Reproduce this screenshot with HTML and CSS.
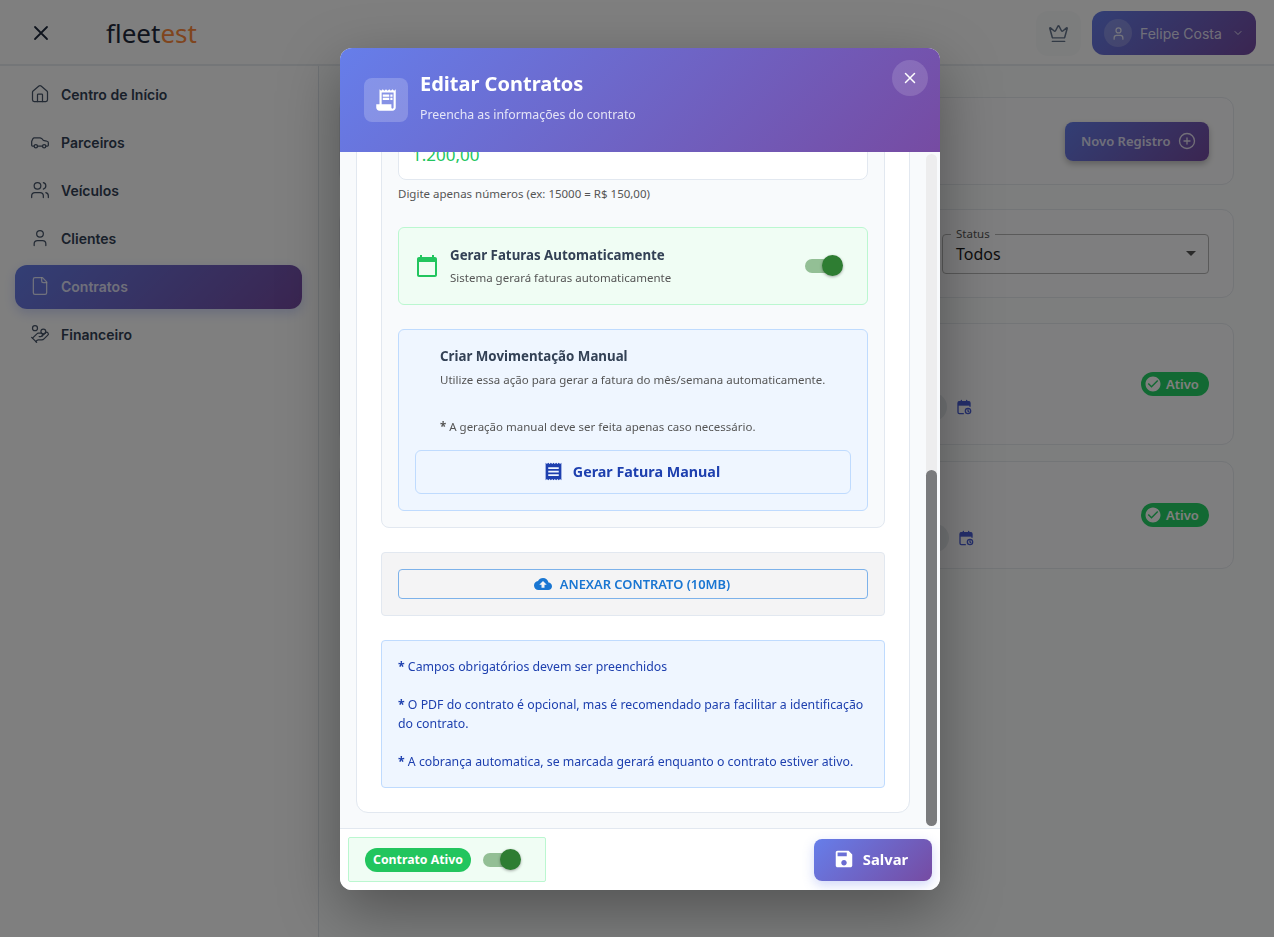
FILE: index.html
```html
<!doctype html>
<html lang="pt-BR">
<head>
<meta charset="utf-8">
<title>Fleetest - Contratos</title>
<link rel="stylesheet" href="styles.css">
</head>

<body>
<header class="topbar">
    <svg class="menu-x" viewBox="0 0 24 24"><path d="M18 6 6 18M6 6l12 12"/></svg>
    <div class="logo">fleet<span>est</span></div>
    <div class="crown-btn">
        <svg viewBox="0 0 24 24"><path d="M11.562 3.266a.5.5 0 0 1 .876 0L15.39 8.87a1 1 0 0 0 1.516.294L21.183 5.5a.5.5 0 0 1 .798.519l-2.834 10.246a1 1 0 0 1-.956.734H5.81a1 1 0 0 1-.957-.734L2.02 6.02a.5.5 0 0 1 .798-.519l4.276 3.664a1 1 0 0 0 1.516-.294z"/><path d="M5 21h14"/></svg>
    </div>
    <div class="user-btn">
        <span class="avatar"><svg viewBox="0 0 24 24"><circle cx="12" cy="7" r="4"/><path d="M19 21v-2a4 4 0 0 0-4-4H9a4 4 0 0 0-4 4v2"/></svg></span>
        <span class="user-name">Felipe Costa</span>
        <svg class="chev" viewBox="0 0 24 24"><path d="m6 9 6 6 6-6"/></svg>
    </div>
</header>

<div class="page">
    <nav class="sidebar">
        <a class="nav-item"><svg viewBox="0 0 24 24"><path d="M15 21v-8a1 1 0 0 0-1-1h-4a1 1 0 0 0-1 1v8"/><path d="M3 10a2 2 0 0 1 .709-1.528l7-5.999a2 2 0 0 1 2.582 0l7 5.999A2 2 0 0 1 21 10v9a2 2 0 0 1-2 2H5a2 2 0 0 1-2-2z"/></svg>Centro de Início</a>
        <a class="nav-item"><svg viewBox="0 0 24 24"><path d="M19 17h2c.6 0 1-.4 1-1v-3c0-.9-.7-1.700-1.500-1.900C18.700 10.600 16 10 16 10s-1.300-1.400-2.200-2.300c-.5-.4-1.100-.7-1.800-.7H5c-.6 0-1.100.4-1.400.9l-1.400 2.900A3.700 3.700 0 0 0 2 12v4c0 .6.4 1 1 1h2"/><circle cx="7" cy="17" r="2"/><path d="M9 17h6"/><circle cx="17" cy="17" r="2"/></svg>Parceiros</a>
        <a class="nav-item"><svg viewBox="0 0 24 24"><path d="M16 21v-2a4 4 0 0 0-4-4H6a4 4 0 0 0-4 4v2"/><circle cx="9" cy="7" r="4"/><path d="M22 21v-2a4 4 0 0 0-3-3.870"/><path d="M16 3.130a4 4 0 0 1 0 7.750"/></svg>Veículos</a>
        <a class="nav-item"><svg viewBox="0 0 24 24"><path d="M19 21v-2a4 4 0 0 0-4-4H9a4 4 0 0 0-4 4v2"/><circle cx="12" cy="7" r="4"/></svg>Clientes</a>
        <a class="nav-item active"><svg viewBox="0 0 24 24"><path d="M15 2H6a2 2 0 0 0-2 2v16a2 2 0 0 0 2 2h12a2 2 0 0 0 2-2V7z"/><path d="M14 2v4a2 2 0 0 0 2 2h4"/></svg>Contratos</a>
        <a class="nav-item"><svg viewBox="0 0 24 24"><path d="M11 15h2a2 2 0 1 0 0-4h-3c-.6 0-1.100.2-1.400.6L3 17"/><path d="m7 21 1.600-1.400c.3-.4.8-.6 1.400-.6h4c1.100 0 2.100-.4 2.800-1.200l4.600-4.400a2 2 0 0 0-2.750-2.910l-4.200 3.900"/><path d="m2 16 6 6"/><circle cx="16" cy="9" r="2.900"/><circle cx="6" cy="5" r="3"/></svg>Financeiro</a>
    </nav>

    <main class="content">
        <section class="card card-head">
            <div class="new-btn">Novo Registro
                <svg viewBox="0 0 24 24"><circle cx="12" cy="12" r="10"/><path d="M8 12h8M12 8v8"/></svg>
            </div>
        </section>
        <section class="card card-filter">
            <div class="select">
                <span class="select-label">Status</span>
                <span>Todos</span>
                <i class="caret"></i>
            </div>
        </section>
        <section class="card card-row">
            <div class="meta">
                <i class="dot"></i>
                <svg class="cal-icon" viewBox="0 0 24 24"><path class="cal-band" d="M3 4h18v6H3z"/><path d="M8 2v4M16 2v4"/><path d="M21 11V6a2 2 0 0 0-2-2H5a2 2 0 0 0-2 2v14a2 2 0 0 0 2 2h6"/><circle cx="18" cy="18" r="4"/><path d="M18 16v2l1 1"/></svg>
            </div>
            <span class="pill"><svg viewBox="0 0 24 24"><path d="M12 2C6.480 2 2 6.480 2 12s4.480 10 10 10 10-4.480 10-10S17.520 2 12 2zm-2 15-5-5 1.410-1.410L10 14.170l7.590-7.590L19 8l-9 9z"/></svg>Ativo</span>
        </section>
        <section class="card card-row card-short">
            <div class="meta">
                <i class="dot"></i>
                <svg class="cal-icon" viewBox="0 0 24 24"><path class="cal-band" d="M3 4h18v6H3z"/><path d="M8 2v4M16 2v4"/><path d="M21 11V6a2 2 0 0 0-2-2H5a2 2 0 0 0-2 2v14a2 2 0 0 0 2 2h6"/><circle cx="18" cy="18" r="4"/><path d="M18 16v2l1 1"/></svg>
            </div>
            <span class="pill"><svg viewBox="0 0 24 24"><path d="M12 2C6.480 2 2 6.480 2 12s4.480 10 10 10 10-4.480 10-10S17.520 2 12 2zm-2 15-5-5 1.410-1.410L10 14.170l7.590-7.590L19 8l-9 9z"/></svg>Ativo</span>
        </section>
    </main>
</div>

<div class="overlay"></div>

<div class="modal">
    <div class="modal-head">
        <div class="head-icon">
            <svg viewBox="0 0 24 24"><path d="M19.500 3.500 18 2l-1.500 1.500L15 2l-1.500 1.500L12 2l-1.500 1.500L9 2 7.500 3.500 6 2v14H3v3c0 1.660 1.340 3 3 3h12c1.660 0 3-1.340 3-3V2l-1.500 1.500zM19 19c0 .550-.450 1-1 1s-1-.450-1-1v-3H8V5h11v14z"/><path d="M9 7h6v2H9zm7 0h2v2h-2zm-7 3h6v2H9zm7 0h2v2h-2z"/></svg>
        </div>
        <div>
            <h2 class="modal-title">Editar Contratos</h2>
            <p class="modal-sub">Preencha as informações do contrato</p>
        </div>
        <div class="modal-close"><svg viewBox="0 0 24 24"><path d="M18 6 6 18M6 6l12 12"/></svg></div>
    </div>

    <div class="modal-body">
        <div class="outer-card">
            <div class="inner-card">
                <div class="money-field">1.200,00</div>
                <p class="helper">Digite apenas números (ex: 15000 = R$ 150,00)</p>

                <div class="auto-box">
                    <svg class="auto-icon" viewBox="0 0 24 24"><path d="M20 3h-1V1h-2v2H7V1H5v2H4c-1.100 0-2 .9-2 2v16c0 1.100.9 2 2 2h16c1.100 0 2-.9 2-2V5c0-1.100-.9-2-2-2zm0 18H4V8h16v13z"/></svg>
                    <div class="auto-text">
                        <div class="box-title">Gerar Faturas Automaticamente</div>
                        <div class="box-desc">Sistema gerará faturas automaticamente</div>
                    </div>
                    <span class="switch"><i></i></span>
                </div>

                <div class="manual-box">
                    <div class="box-title manual-title">Criar Movimentação Manual</div>
                    <div class="box-desc manual-desc">Utilize essa ação para gerar a fatura do mês/semana automaticamente.</div>
                    <div class="box-desc manual-note"><b>*</b> A geração manual deve ser feita apenas caso necessário.</div>
                    <div class="manual-btn">
                        <svg viewBox="0 0 24 24"><path d="M18 17H6v-2h12v2zm0-4H6v-2h12v2zm0-4H6V7h12v2zM3 22l1.500-1.500L6 22l1.500-1.500L9 22l1.500-1.500L12 22l1.500-1.500L15 22l1.500-1.500L18 22l1.500-1.500L21 22V2l-1.500 1.500L18 2l-1.500 1.500L15 2l-1.500 1.500L12 2l-1.500 1.500L9 2 7.500 3.500 6 2 4.500 3.500 3 2v20z"/></svg>
                        Gerar Fatura Manual
                    </div>
                </div>
            </div>

            <div class="attach-box">
                <div class="attach-btn">
                    <svg viewBox="0 0 24 24"><path d="M19.350 10.040C18.670 6.590 15.640 4 12 4 9.110 4 6.600 5.640 5.350 8.040 2.340 8.360 0 10.910 0 14c0 3.310 2.690 6 6 6h13c2.760 0 5-2.240 5-5 0-2.640-2.050-4.780-4.650-4.960zM14 13v4h-4v-4H7l5-5 5 5h-3z"/></svg>
                    ANEXAR CONTRATO (10MB)
                </div>
            </div>

            <div class="info-box">
                <p><b>*</b> Campos obrigatórios devem ser preenchidos</p>
                <p><b>*</b> O PDF do contrato é opcional, mas é recomendado para facilitar a identificação do contrato.</p>
                <p><b>*</b> A cobrança automatica, se marcada gerará enquanto o contrato estiver ativo.</p>
            </div>
        </div>
        <div class="scroll-track"><div class="scroll-thumb"></div></div>
    </div>

    <div class="modal-foot">
        <div class="active-box">
            <span class="active-pill">Contrato Ativo</span>
            <span class="switch"><i></i></span>
        </div>
        <div class="save-btn">
            <svg viewBox="0 0 24 24"><path d="M17 3H5c-1.110 0-2 .9-2 2v14c0 1.100.890 2 2 2h14c1.100 0 2-.9 2-2V7l-4-4zm-5 16c-1.660 0-3-1.340-3-3s1.340-3 3-3 3 1.340 3 3-1.340 3-3 3zm3-10H5V5h10v4z"/></svg>
            Salvar
        </div>
    </div>
</div>
</body>
</html>
```

FILE: styles.css
```css
*{box-sizing:border-box;}
html,body{margin:0;padding:0;height:100%;}
body{background:#fbfcfd;font-family:"Inter","Noto Sans",sans-serif;color:#1e293b;overflow:hidden;}
p,h2{margin:0;}
svg{display:block;fill:none;stroke:currentColor;stroke-width:2;stroke-linecap:round;stroke-linejoin:round;}

/* top bar */
.topbar{display:flex;align-items:center;height:66px;padding:2px 18px 0 29px;background:#fff;border-bottom:2px solid #e8ecf1;}
.menu-x{width:24px;height:24px;stroke-width:1.8;color:#1e293b;}
.logo{margin-left:53px;font:400 26px/1 "Noto Sans",sans-serif;color:#1e293b;}
.logo span{color:#ff8a3c;}
.crown-btn{display:flex;align-items:center;justify-content:center;width:45px;height:45px;margin-left:auto;background:#f9fafb;border-radius:12px;color:#64748b;}
.crown-btn svg{width:21px;height:21px;stroke-width:1.7;}
.user-btn{display:flex;align-items:center;width:164px;height:44px;margin-left:11px;padding:0 12px;border-radius:12px;background:linear-gradient(135deg,#667eea,#764ba2);color:rgba(255,255,255,.8);}
.avatar{display:flex;align-items:center;justify-content:center;width:28px;height:28px;border-radius:50%;background:rgba(255,255,255,.2);}
.avatar svg{width:15px;height:15px;}
.user-name{margin-left:8px;font-size:14px;white-space:nowrap;}
.chev{width:12px;height:12px;margin-left:auto;}

/* page behind the dialog */
.page{display:flex;height:871px;}
.sidebar{flex:none;width:319px;padding:7px 16px 0 15px;background:#fff;border-right:1px solid #dfe4ea;}
.nav-item{display:flex;align-items:center;height:44px;margin-bottom:4px;padding:0 0 2px 15px;border-radius:12px;font-size:14px;font-weight:600;color:#334155;}
.nav-item svg{flex:none;width:20px;height:20px;margin-right:11px;stroke-width:1.5;color:#475569;}
.nav-item.active{background:linear-gradient(135deg,#667eea,#764ba2);color:rgba(255,255,255,.8);box-shadow:0 4px 12px rgba(102,126,234,.3);}
.nav-item.active svg{color:rgba(255,255,255,.8);}
.content{flex:1;padding:31px 40px 0 20px;}
.card{display:flex;align-items:center;justify-content:flex-end;padding:0 24px;background:#fdfdfe;border:1px solid #e6eaef;border-radius:12px;}
.card-head{height:88px;margin-bottom:24px;}
.card-filter{height:89px;margin-bottom:25px;}
.card-row{height:122px;margin-bottom:16px;justify-content:space-between;}
.card-short{height:108px;}
.new-btn{display:flex;align-items:center;gap:8px;width:144px;height:39px;padding-left:16px;border-radius:8px;background:linear-gradient(135deg,#667eea,#764ba2);color:rgba(255,255,255,.8);font:600 13px "Noto Sans",sans-serif;box-shadow:0 3px 6px rgba(0,0,0,.25);white-space:nowrap;}
.new-btn svg{width:18px;height:18px;stroke-width:1.8;}
.select{position:relative;display:flex;align-items:center;justify-content:space-between;width:267px;height:40px;padding:0 13px;border:1px solid #b5b5b5;border-radius:4px;font:16px "Noto Sans",sans-serif;color:#1a1a1a;}
.select-label{position:absolute;left:8px;top:-8px;padding:0 5px;background:#fdfdfe;font-size:11.5px;line-height:14px;color:#555;}
.caret{width:0;height:0;border:5px solid transparent;border-top-color:#555;border-bottom:0;margin-right:-1px;}
.meta{flex:1;display:flex;align-items:center;justify-content:flex-end;gap:9px;margin-top:46px;padding-right:169px;}
.card-short .meta{padding-right:167px;}
.dot{width:28px;height:28px;border-radius:50%;background:#e6eaef;}
.cal-icon{width:16px;height:16px;color:#4a5fd8;}
.cal-band{fill:currentColor;stroke:none;}
.pill{display:flex;align-items:center;gap:4px;width:68px;height:24px;padding-left:3px;border-radius:12px;background:#25d366;color:#fff;font:600 13px "Noto Sans",sans-serif;}
.pill svg{width:18px;height:18px;fill:currentColor;stroke:none;}

.overlay{position:fixed;inset:0;background:rgba(0,0,0,.5);backdrop-filter:blur(.4px);}

/* dialog */
.modal{position:fixed;left:340px;top:48px;display:flex;flex-direction:column;width:600px;height:842px;border-radius:12px;overflow:hidden;background:#fff;font-family:"Noto Sans",sans-serif;box-shadow:0 20px 60px rgba(0,0,0,.35);}
.modal-head{position:relative;z-index:1;flex:none;display:flex;align-items:center;gap:12px;height:104px;padding:0 24px;background:linear-gradient(135deg,#667eea,#764ba2);color:#fff;}
.head-icon{display:flex;align-items:center;justify-content:center;width:44px;height:44px;border-radius:8px;background:rgba(255,255,255,.2);}
.head-icon svg{width:26px;height:26px;fill:#fff;stroke:none;}
.modal-title{font-size:20px;font-weight:700;line-height:28px;margin-top:-7px;}
.modal-sub{margin-top:8px;font-size:12.3px;line-height:18px;color:rgba(255,255,255,.82);}
.modal-close{position:absolute;right:12px;top:12px;display:flex;align-items:center;justify-content:center;width:36px;height:36px;border-radius:50%;background:rgba(255,255,255,.15);}
.modal-close svg{width:18px;height:18px;}

.modal-body{position:relative;flex:1;min-height:0;overflow:hidden;padding:0 30px 0 16px;background:#f8fafc;}
.outer-card{margin-top:-60px;padding:24px;background:#fff;border:1px solid #e2e8f0;border-radius:12px;}
.inner-card{padding:16px;background:#f8fafc;border:1px solid #e2e8f0;border-radius:8px;}
.money-field{height:46px;padding:10px 13px 0;background:#fff;border:1px solid #e2e8f0;border-radius:8px;font-size:17px;line-height:20px;color:#22c55e;}
.helper{margin-top:5px;font-size:11.5px;line-height:18px;color:#555;}

.auto-box{display:flex;align-items:center;height:78px;margin-top:24px;padding:0 26px 0 16px;background:#f0fdf4;border:1px solid #bbf7d0;border-radius:6px;}
.auto-icon{flex:none;width:24px;height:24px;margin-right:11px;fill:#22c55e;stroke:none;}
.auto-text{flex:1;padding-bottom:2px;}
.box-title{font-size:13.3px;font-weight:700;line-height:24px;color:#334155;}
.box-desc{font-size:11.5px;line-height:20px;color:#555;}
.auto-text .box-desc{margin-top:1px;}

.manual-box{margin-top:24px;padding:14px 16px 16px;background:#eff6ff;border:1px solid #bfdbfe;border-radius:6px;}
.manual-title,.manual-desc,.manual-note{padding-left:25px;}
.manual-desc{margin-top:2px;}
.manual-note{margin-top:27px;}
.manual-btn{display:flex;align-items:center;justify-content:center;gap:9px;height:44px;margin-top:13px;padding:0 3px 2px 0;border:1px solid #bfdbfe;border-radius:6px;color:#1e40af;font-size:14.3px;font-weight:700;}
.manual-btn svg{width:21px;height:21px;fill:currentColor;stroke:none;}

.attach-box{margin-top:24px;padding:16px;background:#f4f4f5;border:1px solid #e2e8f0;border-radius:4px;}
.attach-btn{display:flex;align-items:center;justify-content:center;gap:8px;height:30px;padding-right:2px;border:1px solid #7db2ea;border-radius:4px;color:#1976d2;font-size:12.9px;font-weight:600;}
.attach-btn svg{width:18px;height:18px;fill:currentColor;stroke:none;}

.info-box{margin-top:24px;padding:16px;background:#eff6ff;border:1px solid #bfdbfe;border-radius:4px;font-size:12.3px;line-height:19px;color:#1e40af;}
.info-box p+p{margin-top:19px;}

.scroll-track{position:absolute;right:3px;top:2px;bottom:2px;width:11px;border-radius:6px;background:#ededee;}
.scroll-thumb{position:absolute;left:0;right:0;bottom:0;height:356px;border-radius:6px;background:#7a7b7d;}

.modal-foot{flex:none;display:flex;align-items:center;justify-content:space-between;height:62px;padding:0 8px;background:#fff;border-top:1px solid #e2e8f0;}
.active-box{display:flex;align-items:center;gap:12px;width:198px;height:45px;padding-left:16px;background:#f0fdf4;border:1px solid #bbf7d0;border-radius:2px;}
.active-pill{height:24px;padding:0 8px;border-radius:12px;background:#22c55e;color:#fff;font-size:12.3px;font-weight:700;line-height:23px;white-space:nowrap;}
.switch{position:relative;flex:none;display:block;width:36px;height:14px;border-radius:7px;background:#93bf95;}
.switch i{position:absolute;right:-2px;top:-4px;width:21px;height:21px;border-radius:50%;background:#2e7d32;box-shadow:0 1px 3px rgba(0,0,0,.35);}
.save-btn{display:flex;align-items:center;justify-content:center;gap:8px;width:118px;height:42px;padding:0 5px 2px 0;border-radius:8px;background:linear-gradient(135deg,#667eea,#764ba2);color:#fff;font-size:14.8px;font-weight:700;box-shadow:0 4px 12px rgba(102,126,234,.3);}
.save-btn svg{width:22px;height:22px;fill:currentColor;stroke:none;}
```
